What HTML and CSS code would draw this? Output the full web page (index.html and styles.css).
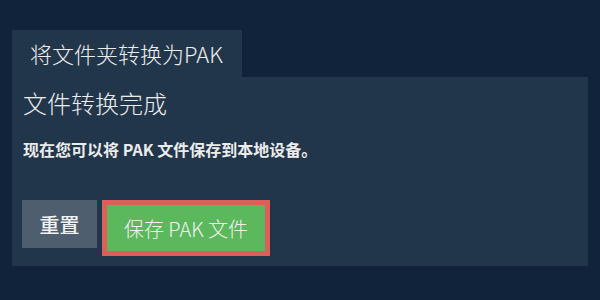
FILE: index.html
```html
<!DOCTYPE html>
<html lang="zh-CN">
<head>
    <meta charset="UTF-8">
    <meta name="viewport" content="width=device-width, initial-scale=1.0">
    <title>将文件夹转换为PAK</title>
    <link rel="stylesheet" href="styles.css">
</head>
<body>
<div class="wrapper">
    <div class="tab">将文件夹转换为PAK</div>
    <div class="panel">
        <h2>文件转换完成</h2>
        <p class="info">现在您可以将 PAK 文件保存到本地设备。</p>
        <div class="actions">
            <button type="button" class="btn btn-reset">重置</button>
            <button type="button" class="btn btn-save">保存 PAK 文件</button>
        </div>
    </div>
</div>
</body>
</html>
```

FILE: styles.css
```css
* {
    margin: 0;
    padding: 0;
    box-sizing: border-box;
}

body {
    font-family: "Noto Sans CJK SC", "Noto Sans", sans-serif;
    background: #10233a;
    color: #ececec;
    padding: 30px 12px;
}

.tab {
    display: inline-block;
    background: #22364b;
    font-size: 22px;
    font-weight: 300;
    line-height: 47px;
    height: 47px;
    padding: 0 19px 0 18px;
}

.panel {
    background: #22364b;
    padding: 10px;
}

h2 {
    font-size: 24px;
    font-weight: 300;
    line-height: 32px;
    margin-left: 1px;
}

.info {
    font-size: 16px;
    font-weight: bold;
    line-height: 20px;
    margin-top: 20px;
    margin-left: 1px;
}

.actions {
    display: flex;
    align-items: flex-start;
    gap: 5px;
    margin-top: 41px;
}

.btn {
    font-family: inherit;
    color: #f2f2f2;
    border: none;
    cursor: pointer;
    font-size: 20px;
}

.btn-reset {
    background: #4e5e6e;
    width: 75px;
    height: 48px;
    font-weight: 500;
}

.btn-save {
    background: #5cb85c;
    border: 5px solid #dc5f5b;
    width: 168px;
    height: 56px;
    font-weight: 300;
}
```
